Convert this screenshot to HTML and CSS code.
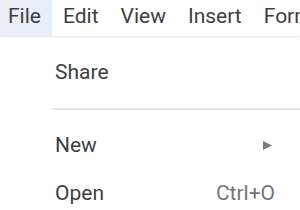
FILE: index.html
```html
<!DOCTYPE html>
<html lang="en">
<head>
<meta charset="UTF-8">
<meta name="viewport" content="width=device-width, initial-scale=1.0">
<title>File menu</title>
<link rel="stylesheet" href="styles.css">
</head>
<body>
<div class="menubar">
    <div class="menubar-item active">File</div>
    <div class="menubar-item">Edit</div>
    <div class="menubar-item">View</div>
    <div class="menubar-item">Insert</div>
    <div class="menubar-item">Format</div>
</div>

<div class="menu">
    <div class="menu-item">
        <span class="label">Share</span>
    </div>
    <div class="separator"></div>
    <div class="menu-item">
        <span class="label">New</span>
        <svg class="submenu-arrow" width="9" height="9" viewBox="0 0 9 9">
            <polygon points="0,0 9,4.5 0,9" fill="#7a7a7a"/>
        </svg>
    </div>
    <div class="menu-item">
        <span class="label">Open</span>
        <span class="shortcut">Ctrl+O</span>
    </div>
</div>
</body>
</html>
```

FILE: styles.css
```css
body {
    font-family: Roboto, "Liberation Sans", Arial, sans-serif;
    margin: 0;
    padding: 0;
    background: #fff;
    width: 300px;
    height: 210px;
    overflow: hidden;
}

.menubar {
    display: flex;
    white-space: nowrap;
    height: 36px;
    background: #fff;
    box-shadow: 0 1px 2px rgba(0, 0, 0, 0.12);
    position: relative;
    z-index: 1;
}

.menubar-item {
    font-size: 21px;
    color: #3c4043;
    line-height: 33px;
    padding: 0 11px 3px;
}

.menubar-item:first-child {
    padding-left: 8px;
}

.menubar-item.active {
    background: #e8eef7;
}

.menu {
    padding-top: 12px;
    background: #fff;
}

.menu-item {
    display: flex;
    align-items: center;
    justify-content: space-between;
    height: 48px;
    padding: 0 25px 0 55px;
    font-size: 21px;
    color: #3c4043;
}

.shortcut {
    color: #70757a;
    font-size: 21px;
}

.submenu-arrow {
    margin-right: 3px;
}

.separator {
    height: 2px;
    background: #e6e6e6;
    margin: 12px 0 11px 52px;
}
```
